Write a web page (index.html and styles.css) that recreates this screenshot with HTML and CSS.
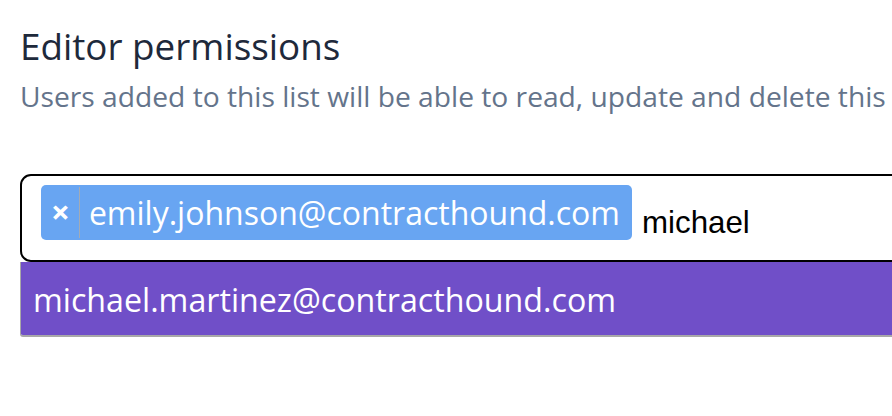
FILE: index.html
```html
<!DOCTYPE html>
<html>
<head>
<meta charset="utf-8">
<link rel="stylesheet" href="styles.css">
</head>
<body>
<div class="page">
  <h2 class="title">Editor permissions</h2>
  <p class="subtitle">Users added to this list will be able to read, update and delete this</p>
  <div class="picker">
    <div class="control">
      <span class="chip"><span class="chip-remove">×</span><span class="chip-label">emily.johnson@contracthound.com</span></span>
      <span class="query">michael</span>
    </div>
    <div class="menu">
      <div class="option active">michael.martinez@contracthound.com</div>
    </div>
  </div>
</div>
</body>
</html>
```
FILE: styles.css
```css
html, body {
  margin: 0;
  padding: 0;
  background: #ffffff;
  overflow: hidden;
}
.page {
  width: 1300px;
  padding: 24px 20px 0 20px;
  font-family: "Open Sans", "Noto Sans", sans-serif;
}
.title {
  margin: 0;
  font-size: 36.8px;
  font-weight: 500;
  line-height: 44px;
  color: #1e293b;
}
.subtitle {
  margin: 10px 0 0 0;
  font-size: 28.2px;
  line-height: 36px;
  color: #64748b;
  white-space: nowrap;
}
.picker {
  margin-top: 60px;
  width: 1200px;
}
.control {
  display: flex;
  align-items: flex-start;
  gap: 10px;
  padding: 9px 19px 0 19px;
  box-sizing: border-box;
  height: 88px;
  border: 2px solid #000000;
  border-radius: 11px;
}
.chip {
  display: flex;
  align-items: stretch;
  height: 55px;
  background: #68a5f2;
  border-radius: 5px;
  color: #ffffff;
}
.chip-remove {
  display: flex;
  align-items: center;
  padding: 0 9px 2px 10px;
  border-right: 1px solid #a3abb5;
  margin: 2px 0;
  font-size: 33px;
  font-weight: 700;
}
.chip-label {
  display: block;
  font-size: 32px;
  line-height: 55px;
  padding: 0 12px 0 9px;
}
.query {
  font-family: "Liberation Sans", Arial, sans-serif;
  font-size: 31.3px;
  line-height: 36px;
  color: #000000;
  margin-top: 20px;
}
.menu {
  border-left: 1px solid #a8a8a8;
  border-bottom: 2px solid #a8a8a8;
  border-radius: 0 0 3px 3px;
  overflow: hidden;
}
.option {
  height: 73px;
  line-height: 73px;
  padding: 1px 12px 0 12px;
  box-sizing: border-box;
  background: #704fc8;
  color: #ffffff;
  font-size: 32.2px;
}
```
